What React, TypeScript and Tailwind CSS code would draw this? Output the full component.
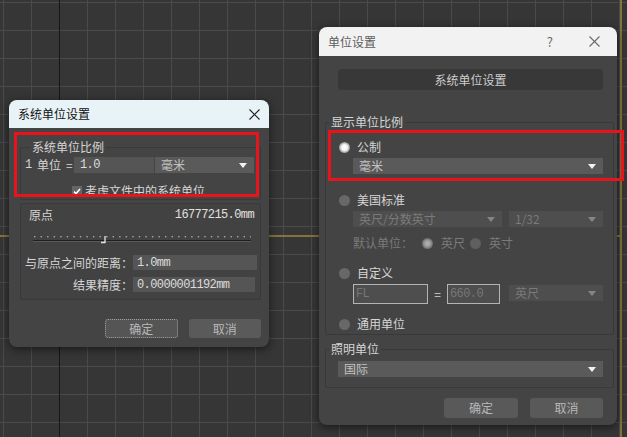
import clsx from 'clsx'

const cjk = "font-['Noto_Sans_CJK_SC',sans-serif]"
const mono = "font-['Liberation_Mono','Noto_Sans_CJK_SC',monospace] tracking-[-0.6px]"

function Tri({ dim }: { dim?: boolean }) {
  return (
    <svg width="8" height="5" viewBox="0 0 8 5" className="shrink-0">
      <path d="M0 0H8L4 5Z" fill={dim ? '#858585' : '#f2f2f2'} />
    </svg>
  )
}

function Drop({ label, className, dim }: { label: string; className: string; dim?: boolean }) {
  return (
    <div
      className={clsx(
        'flex items-center justify-between pl-[6px] pr-[7px] text-[12px] leading-none',
        dim ? 'bg-[#4e4e4e] text-[#7a7a7a]' : 'bg-[#5a5a5a] text-[#c2c2c2]',
        className,
      )}
    >
      <span>{label}</span>
      <Tri dim={dim} />
    </div>
  )
}

type RadioKind = 'on' | 'off' | 'dimOn' | 'dimOff'

function Radio({ kind }: { kind: RadioKind }) {
  return (
    <span
      className={clsx(
        'block h-[11px] w-[11px] shrink-0 rounded-full',
        kind === 'on' && 'bg-[radial-gradient(circle,#ffffff_0%,#f4f4f4_38%,#9a9a9a_68%,#6e6e6e_100%)]',
        kind === 'off' && 'bg-[#686868]',
        kind === 'dimOn' && 'bg-[radial-gradient(circle,#b4b4b4_0%,#a0a0a0_35%,#6c6c6c_70%,#5e5e5e_100%)]',
        kind === 'dimOff' && 'bg-[#5f5f5f]',
      )}
    />
  )
}

function Legend({ children, className }: { children: string; className?: string }) {
  return (
    <span className={clsx('absolute top-[-9px] bg-[#444444] px-[2px] text-[12px] leading-[16px] text-[#d6d6d6]', className)}>
      {children}
    </span>
  )
}

function CloseX({ color }: { color: string }) {
  return (
    <svg width="11" height="11" viewBox="0 0 11 11" className="shrink-0">
      <path d="M0.5 0.5L10.5 10.5M10.5 0.5L0.5 10.5" stroke={color} strokeWidth="1.1" />
    </svg>
  )
}

function Slider() {
  const dots = Array.from({ length: 34 }, (_, i) => 1 + i * 6.55)
  return (
    <svg width="218" height="9" viewBox="0 0 218 9" className="ml-[12px] mt-[12px] block">
      {dots.map((x) => (
        <rect key={x} x={x} y="1" width="1.4" height="1.4" fill="#a8a8a8" />
      ))}
      <rect x="0" y="5" width="218" height="1" fill="#1f1f1f" />
      <rect x="0" y="6" width="218" height="1" fill="#5a5a5a" />
      <path d="M72 1V7.5H68" stroke="#e6e6e6" strokeWidth="1.3" fill="none" />
    </svg>
  )
}

function SystemDialog() {
  return (
    <div className="absolute left-[9px] top-[100px] flex h-[247px] w-[260px] flex-col rounded-[8px] bg-[#444444] shadow-[0_2px_10px_rgba(0,0,0,0.55)]">
      <div className="flex h-[28px] items-center justify-between rounded-t-[8px] bg-[#e8f3f7] pl-[9px] pr-[9px]">
        <span className="text-[12px] leading-none text-[#111111]">系统单位设置</span>
        <CloseX color="#222222" />
      </div>

      <div className="flex flex-1 flex-col pl-[11px] pr-[8px] pt-[19px] text-[#d6d6d6]">
        <div className="relative h-[53px] rounded-[2px] border border-[#393939] pl-[4px]">
          <Legend className="left-[9px]">系统单位比例</Legend>
          <div className="mt-[9px] flex h-[16px] items-center text-[12px] leading-none">
            <span className={clsx('w-[12px]', mono)}>1</span>
            <span className="w-[29px]">单位</span>
            <span className="w-[8px]">=</span>
            <div className={clsx('flex h-[16px] w-[80px] items-center bg-[#555555] pl-[6px] text-[12px] text-[#dcdcdc]', mono)}>
              1.0
            </div>
            <Drop label="毫米" className="ml-[1px] h-[16px] w-[99px]" />
          </div>
          <div className="ml-[47px] mt-[13px] flex h-[10px] items-center">
            <span className="flex h-[10px] w-[10px] items-center justify-center bg-[#666666]">
              <svg width="8" height="7" viewBox="0 0 8 7">
                <path d="M1 3.6L3 5.6L7 1" stroke="#ffffff" strokeWidth="1.5" fill="none" />
              </svg>
            </span>
            <span className="ml-[3px] text-[12px] leading-none">考虑文件中的系统单位</span>
          </div>
        </div>

        <div className="mt-[3px] h-[97px] rounded-[2px] border border-[#393939] bg-[#424242]">
          <div className="mt-[3px] flex h-[16px] items-center justify-between pl-[8px] pr-[6px] text-[12px] leading-none">
            <span>原点</span>
            <span className={clsx('text-[12px] text-[#e0e0e0]', mono)}>16777215.0mm</span>
          </div>
          <Slider />
          <div className="mt-[11px] flex h-[15px] items-center pl-[4px] text-[12px] leading-none">
            <span className="w-[108px]">与原点之间的距离：</span>
            <div className={clsx('flex h-[15px] w-[124px] items-center bg-[#555555] pl-[4px] text-[12px] text-[#dcdcdc]', mono)}>
              1.0mm
            </div>
          </div>
          <div className="mt-[7px] flex h-[15px] items-center pl-[4px] text-[12px] leading-none">
            <span className="w-[108px] text-right">结果精度：</span>
            <div className={clsx('flex h-[15px] w-[122px] items-center bg-[#555555] pl-[4px] text-[12px] text-[#dcdcdc]', mono)}>
              0.0000001192mm
            </div>
          </div>
        </div>

        <div className="ml-[85px] mt-[19px] flex h-[19px] gap-[11px] text-[12px] leading-none text-[#b8b8b8]">
          <button className="flex w-[73px] items-center justify-center rounded-[3px] border border-dotted border-[#a0a0a0] bg-[#555555]">
            确定
          </button>
          <button className="flex w-[73px] items-center justify-center rounded-[3px] bg-[#5a5a5a]">取消</button>
        </div>
      </div>

      <div className="pointer-events-none absolute left-[5px] top-[32px] h-[65px] w-[245px] border-[3px] border-[#e8141c]" />
    </div>
  )
}

function UnitsDialog() {
  const label = 'text-[12px] leading-none'
  return (
    <div className="absolute left-[319px] top-[27px] flex h-[398px] w-[298px] flex-col rounded-[8px] bg-[#444444] shadow-[0_2px_10px_rgba(0,0,0,0.55)]">
      <div className="flex h-[29px] items-center rounded-t-[8px] bg-[#f2f2f2] pl-[9px]">
        <span className="flex-1 text-[12px] leading-none text-[#5c5c5c]">单位设置</span>
        <span className="mr-[36px] text-[13px] leading-none text-[#6a6a6a]">?</span>
        <span className="mr-[17px]">
          <CloseX color="#6a6a6a" />
        </span>
      </div>

      <div className="flex flex-1 flex-col pl-[6px] pr-[3px] text-[#d6d6d6]">
        <div className="ml-[13px] mt-[13px] flex h-[21px] w-[265px] items-center justify-center rounded-[4px] bg-[#383838] text-[12px] leading-none text-[#cdcdcd]">
          系统单位设置
        </div>

        <div className="relative mt-[32px] h-[213px] w-[289px] rounded-[2px] border border-[#393939] pl-[13px]">
          <Legend className="left-[3px]">显示单位比例</Legend>

          <div className="mt-[18px] flex h-[12px] items-center">
            <Radio kind="on" />
            <span className={clsx('ml-[7px]', label)}>公制</span>
          </div>
          <Drop label="毫米" className="ml-[14px] mt-[5px] h-[16px] w-[250px]" />

          <div className="mt-[20px] flex h-[12px] items-center">
            <Radio kind="off" />
            <span className={clsx('ml-[7px]', label)}>美国标准</span>
          </div>
          <div className="ml-[14px] mt-[5px] flex gap-[7px]">
            <Drop dim label="英尺/分数英寸" className="h-[16px] w-[149px]" />
            <Drop dim label="1/32" className="h-[16px] w-[94px]" />
          </div>

          <div className="ml-[14px] mt-[10px] flex h-[12px] items-center text-[#7a7a7a]">
            <span className={clsx('w-[69px]', label)}>默认单位：</span>
            <Radio kind="dimOn" />
            <span className={clsx('ml-[8px] w-[24px]', label)}>英尺</span>
            <span className="ml-[5px]">
              <Radio kind="dimOff" />
            </span>
            <span className={clsx('ml-[8px]', label)}>英寸</span>
          </div>

          <div className="mt-[18px] flex h-[12px] items-center">
            <Radio kind="off" />
            <span className={clsx('ml-[7px]', label)}>自定义</span>
          </div>
          <div className="ml-[14px] mt-[5px] flex h-[20px] items-start">
            <div className={clsx('flex h-[20px] w-[75px] items-center border border-[#b4b4b4] bg-[#4e4e4e] pl-[2px] text-[12px] text-[#777777]', mono)}>
              FL
            </div>
            <span className="flex h-[20px] w-[19px] items-center justify-center text-[12px] leading-none text-[#d6d6d6]">=</span>
            <div className={clsx('flex h-[20px] w-[53px] items-center border border-[#b4b4b4] bg-[#4e4e4e] pl-[2px] text-[12px] text-[#777777]', mono)}>
              660.0
            </div>
            <Drop dim label="英尺" className="ml-[9px] mt-[1px] h-[16px] w-[94px]" />
          </div>

          <div className="mt-[14px] flex h-[12px] items-center">
            <Radio kind="off" />
            <span className={clsx('ml-[7px]', label)}>通用单位</span>
          </div>
        </div>

        <div className="relative mt-[14px] h-[39px] w-[289px] rounded-[2px] border border-[#393939] pl-[12px]">
          <Legend className="left-[3px]">照明单位</Legend>
          <Drop label="国际" className="mt-[11px] h-[16px] w-[265px] pl-[5px]" />
        </div>

        <div className="ml-[119px] mt-[10px] flex h-[20px] gap-[12px] text-[12px] leading-none text-[#b8b8b8]">
          <button className="flex w-[74px] items-center justify-center rounded-[3px] bg-[#595959]">确定</button>
          <button className="flex w-[73px] items-center justify-center rounded-[3px] bg-[#595959]">取消</button>
        </div>
      </div>

      <div className="pointer-events-none absolute left-[9px] top-[103px] h-[51px] w-[296px] border-[3px] border-[#e8141c]" />
    </div>
  )
}

export default function App() {
  return (
    <div
      className={clsx(
        'relative h-[437px] w-[627px] overflow-hidden bg-[#363636]',
        'bg-[linear-gradient(to_right,#4a4a4a_1px,transparent_1px),linear-gradient(to_bottom,#4a4a4a_1px,transparent_1px)] bg-[size:28px_28px] bg-[position:3px_2px]',
        cjk,
      )}
    >
      <div className="absolute left-[59px] top-0 h-full w-px bg-[#161616]" />
      <div className="absolute left-0 top-[235px] h-[2px] w-[621px] bg-[#85733a]" />
      <div className="absolute left-[620px] top-0 h-full w-[2px] bg-[#85733a]" />
      <SystemDialog />
      <UnitsDialog />
    </div>
  )
}
